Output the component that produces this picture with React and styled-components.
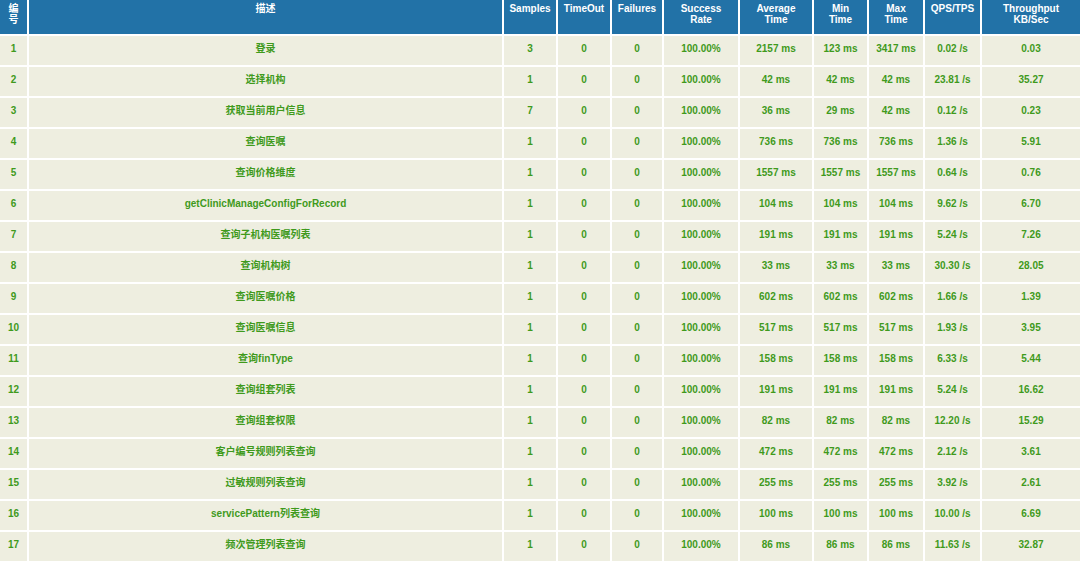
import React from "react";
import styled, { createGlobalStyle } from "styled-components";

const Global = createGlobalStyle`
  html, body { margin: 0; padding: 0; background: #ffffff; }
  body { font-family: "Liberation Sans", Arial, "Noto Sans CJK SC", sans-serif; overflow: hidden; }
`;

const Grid = styled.div`
  display: grid;
  width: 1080px;
  grid-template-columns: 27px 473px 52px 52px 50px 74px 72px 53px 54px 55px 1fr;
  grid-template-rows: 34px;
  grid-auto-rows: 29px;
  gap: 2px;
  background: #ffffff;
`;

const HeadCell = styled.div`
  background: #2272a7;
  color: #ffffff;
  font-weight: bold;
  font-size: 10px;
  line-height: 11px;
  text-align: center;
  padding: 3px 2px 0;
  box-sizing: border-box;
  overflow: hidden;
`;

const Cell = styled.div`
  background: #eeeee0;
  color: ${(p) => p.$color || "#3f9a1c"};
  font-weight: bold;
  font-size: 10px;
  line-height: 13px;
  text-align: center;
  padding: 6px 2px 0;
  box-sizing: border-box;
  white-space: nowrap;
  overflow: hidden;
`;

const headers = [
  ["编", "号"],
  ["描述"],
  ["Samples"],
  ["TimeOut"],
  ["Failures"],
  ["Success", "Rate"],
  ["Average", "Time"],
  ["Min", "Time"],
  ["Max", "Time"],
  ["QPS/TPS"],
  ["Throughput", "KB/Sec"],
];

const rows = [
  ["1", "登录", "3", "2157", "123", "3417", "0.02", "0.03"],
  ["2", "选择机构", "1", "42", "42", "42", "23.81", "35.27"],
  ["3", "获取当前用户信息", "7", "36", "29", "42", "0.12", "0.23"],
  ["4", "查询医嘱", "1", "736", "736", "736", "1.36", "5.91"],
  ["5", "查询价格维度", "1", "1557", "1557", "1557", "0.64", "0.76"],
  ["6", "getClinicManageConfigForRecord", "1", "104", "104", "104", "9.62", "6.70"],
  ["7", "查询子机构医嘱列表", "1", "191", "191", "191", "5.24", "7.26"],
  ["8", "查询机构树", "1", "33", "33", "33", "30.30", "28.05"],
  ["9", "查询医嘱价格", "1", "602", "602", "602", "1.66", "1.39"],
  ["10", "查询医嘱信息", "1", "517", "517", "517", "1.93", "3.95"],
  ["11", "查询finType", "1", "158", "158", "158", "6.33", "5.44"],
  ["12", "查询组套列表", "1", "191", "191", "191", "5.24", "16.62"],
  ["13", "查询组套权限", "1", "82", "82", "82", "12.20", "15.29"],
  ["14", "客户编号规则列表查询", "1", "472", "472", "472", "2.12", "3.61"],
  ["15", "过敏规则列表查询", "1", "255", "255", "255", "3.92", "2.61"],
  ["16", "servicePattern列表查询", "1", "100", "100", "100", "10.00", "6.69"],
  ["17", "频次管理列表查询", "1", "86", "86", "86", "11.63", "32.87"],
];

export default function App() {
  return (
    <>
      <Global />
      <Grid>
        {headers.map((lines, i) => (
          <HeadCell key={"h" + i}>
            {lines.map((l, j) => (
              <React.Fragment key={j}>
                {j > 0 && <br />}
                {l}
              </React.Fragment>
            ))}
          </HeadCell>
        ))}
        {rows.map(([n, name, samples, avg, min, max, qps, tp]) => (
          <React.Fragment key={n}>
            <Cell>{n}</Cell>
            <Cell>{name}</Cell>
            <Cell>{samples}</Cell>
            <Cell>0</Cell>
            <Cell>0</Cell>
            <Cell>100.00%</Cell>
            <Cell>{avg} ms</Cell>
            <Cell>{min} ms</Cell>
            <Cell>{max} ms</Cell>
            <Cell>{qps} /s</Cell>
            <Cell>{tp}</Cell>
          </React.Fragment>
        ))}
      </Grid>
    </>
  );
}
